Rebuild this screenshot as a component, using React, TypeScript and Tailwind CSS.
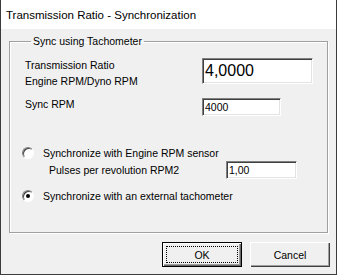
import React from "react";

const bevelIn =
  "border-t border-l border-t-[#808080] border-l-[#808080] border-b border-r border-b-white border-r-white shadow-[inset_1px_1px_0_#404040,inset_-1px_-1px_0_#e3e3e3]";

function Radio({ checked }: { checked?: boolean }) {
  return (
    <span className="relative flex h-[12px] w-[12px] shrink-0 items-center justify-center rounded-full border border-t-[#808080] border-l-[#808080] border-b-white border-r-white bg-white shadow-[inset_1px_1px_0_#404040]">
      {checked && <span className="h-[4px] w-[4px] rounded-full bg-black" />}
    </span>
  );
}

function Field({ value, className, big }: { value: string; className: string; big?: boolean }) {
  return (
    <div className={`flex items-center bg-white pl-[2px] ${bevelIn} ${className}`}>
      <span className={big ? "text-[16px] leading-[18px]" : ""}>{value}</span>
    </div>
  );
}

export default function App() {
  return (
    <div
      className="flex h-[275px] w-[337px] flex-col border-x border-b border-[#3c3c3c] bg-[#f0f0f0] text-[10.5px] leading-[14px] text-black"
      style={{ fontFamily: '"Liberation Sans", Arial, sans-serif' }}
    >
      {/* title bar */}
      <div className="flex h-[29px] shrink-0 items-center bg-white pl-[5px] text-[11.5px]">
        Transmission Ratio - Synchronization
      </div>

      <div className="mt-[5px] px-[8px]">
        <fieldset className="h-[199px] border border-[#a0a0a0] shadow-[1px_1px_0_#fff,inset_1px_1px_0_#fff] pl-[15px]">
          <legend className="ml-[6px] px-[2px]">Sync using Tachometer</legend>

          <div className="mt-[9px] flex items-start">
            <div className="w-[177px] leading-[16px]">
              Transmission Ratio
              <br />
              Engine RPM/Dyno RPM
            </div>
            <Field value="4,0000" big className="mt-[1px] h-[26px] w-[111px]" />
          </div>

          <div className="mt-[7px] flex items-start">
            <div className="w-[177px] leading-[16px]">Sync RPM</div>
            <Field value="4000" className="mt-[2px] h-[18px] w-[79px]" />
          </div>

          <div className="mt-[30px] -ml-[3px] flex items-center gap-[9px]">
            <Radio />
            <span>Synchronize with Engine RPM sensor</span>
          </div>
          <div className="mt-[1px] flex items-center">
            <span className="ml-[24px] w-[177px]">Pulses per revolution RPM2</span>
            <Field value="1,00" className="h-[18px] w-[71px]" />
          </div>

          <div className="mt-[10px] -ml-[3px] flex items-center gap-[9px]">
            <Radio checked />
            <span>Synchronize with an external tachometer</span>
          </div>
        </fieldset>
      </div>

      <div className="mt-[9px] flex justify-end gap-[8px] pr-[6px]">
        <button className="flex h-[25px] w-[80px] items-center justify-center border border-black bg-[#f0f0f0] p-[3px] shadow-[inset_1px_1px_0_#fff,inset_-1px_-1px_0_#696969,inset_-2px_-2px_0_#a0a0a0]">
          <span className="flex h-full w-full items-center justify-center border border-dotted border-black">
            OK
          </span>
        </button>
        <button className="flex h-[25px] w-[80px] items-center justify-center bg-[#f0f0f0] shadow-[inset_1px_1px_0_#fff,inset_-1px_-1px_0_#404040,inset_-2px_-2px_0_#a0a0a0]">
          Cancel
        </button>
      </div>
    </div>
  );
}
